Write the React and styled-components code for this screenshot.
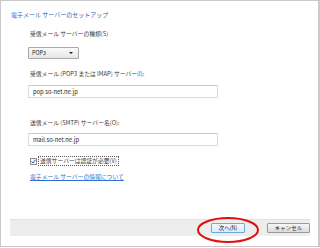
import React from "react";
import styled, { createGlobalStyle } from "styled-components";

const Global = createGlobalStyle`
  html, body { margin: 0; padding: 0; background: #fff; }
  body { font-family: "Noto Sans CJK JP", "Noto Sans", sans-serif; }
`;

const Frame = styled.div`
  box-sizing: border-box;
  width: 320px;
  height: 247px;
  border: 1px solid #c9c9c9;
  border-right-width: 2px;
  display: flex;
  flex-direction: column;
  background: #fff;
`;

const Title = styled.div`
  margin: 10px 0 0 10px;
  font-size: 6px;
  line-height: 8px;
  color: #2f63b5;
  white-space: nowrap;
`;

const Body = styled.div`
  display: flex;
  flex-direction: column;
  align-items: flex-start;
  padding-left: 27px;
`;

const Label = styled.div`
  margin-top: ${(p) => p.$mt}px;
  margin-left: 2px;
  font-size: 5.8px;
  line-height: 8px;
  color: #3a3a3a;
  white-space: nowrap;
`;

const Select = styled.div`
  box-sizing: border-box;
  margin-top: ${(p) => p.$mt}px;
  width: 51px;
  height: 12px;
  border: 1px solid #a9a9a9;
  border-radius: 1px;
  background: linear-gradient(#fafafa, #e6e6e6);
  display: flex;
  align-items: center;
  justify-content: space-between;
  padding: 0 5px 0 3px;
  font-size: 5.5px;
  color: #222;
`;

const Caret = styled.span`
  width: 0;
  height: 0;
  border-left: 2px solid transparent;
  border-right: 2px solid transparent;
  border-top: 2px solid #222;
`;

const Input = styled.div`
  box-sizing: border-box;
  margin-top: ${(p) => p.$mt}px;
  width: 190px;
  height: 13px;
  border: 1px solid #d9dde3;
  border-top-color: #c8ccd2;
  display: flex;
  align-items: center;
  padding-left: 4px;
  font-size: 5.8px;
  color: #222;
`;

const CheckRow = styled.div`
  margin-top: ${(p) => p.$mt}px;
  margin-left: 2px;
  display: flex;
  align-items: center;
  gap: 1px;
`;

const Box = styled.div`
  box-sizing: border-box;
  width: 7px;
  height: 7px;
  border: 1px solid #8e8f8f;
  background: #f4f4f4;
  display: flex;
  align-items: center;
  justify-content: center;
`;

const CheckLabel = styled.div`
  border: 1px dotted #555;
  padding: 0 1px;
  font-size: 5.8px;
  line-height: 8px;
  color: #3a3a3a;
  white-space: nowrap;
`;

const Link = styled.div`
  margin-top: ${(p) => p.$mt}px;
  margin-left: 2px;
  font-size: 5.8px;
  line-height: 8px;
  color: #2e6fcf;
  text-decoration: underline;
  white-space: nowrap;
`;

const Spacer = styled.div`
  flex: 1;
`;

const Bar = styled.div`
  margin: 0 8px 10px 9px;
  height: 16px;
  background: #ededed;
  border-top: 1px solid #e2e2e2;
  display: flex;
  align-items: center;
  justify-content: flex-end;
  gap: 22px;
  position: relative;
`;

const Button = styled.div`
  box-sizing: border-box;
  width: ${(p) => p.$w}px;
  height: 10px;
  border: 1px solid ${(p) => (p.$focus ? "#6fa9dc" : "#9a9a9a")};
  border-radius: 1px;
  background: ${(p) =>
    p.$focus ? "linear-gradient(#f2f8fd, #dcecfa)" : "linear-gradient(#f6f6f6, #dcdcdc)"};
  display: flex;
  align-items: center;
  justify-content: center;
  font-size: 5.5px;
  color: #222;
  white-space: nowrap;
`;

const Ellipse = styled.svg`
  position: absolute;
  left: 187px;
  top: -3px;
  overflow: visible;
`;

export default function App() {
  return (
    <>
      <Global />
      <Frame>
        <Title>電子メール サーバーのセットアップ</Title>
        <Body>
          <Label $mt={11}>受信メール サーバーの種類(S)</Label>
          <Select $mt={9}>
            <span>POP3</span>
            <Caret />
          </Select>
          <Label $mt={11}>受信メール (POP3 または IMAP) サーバー(I):</Label>
          <Input $mt={7}>pop.so-net.ne.jp</Input>
          <Label $mt={21}>送信メール (SMTP) サーバー名(O):</Label>
          <Input $mt={6}>mail.so-net.ne.jp</Input>
          <CheckRow $mt={10}>
            <Box>
              <svg width="5" height="5" viewBox="0 0 5 5">
                <path d="M0.6 2.6 L1.9 4 L4.4 0.8" fill="none" stroke="#3b5f96" strokeWidth="1" />
              </svg>
            </Box>
            <CheckLabel>送信サーバーは認証が必要(V)</CheckLabel>
          </CheckRow>
          <Link $mt={7}>電子メール サーバーの情報について</Link>
        </Body>
        <Spacer />
        <Bar>
          <Button $w={34} $focus>次へ(N)</Button>
          <Button $w={43}>キャンセル</Button>
          <Ellipse width="62" height="26" viewBox="0 0 62 26">
            <ellipse cx="31" cy="13" rx="30" ry="12" fill="none" stroke="#e01010" strokeWidth="2" />
          </Ellipse>
        </Bar>
      </Frame>
    </>
  );
}
